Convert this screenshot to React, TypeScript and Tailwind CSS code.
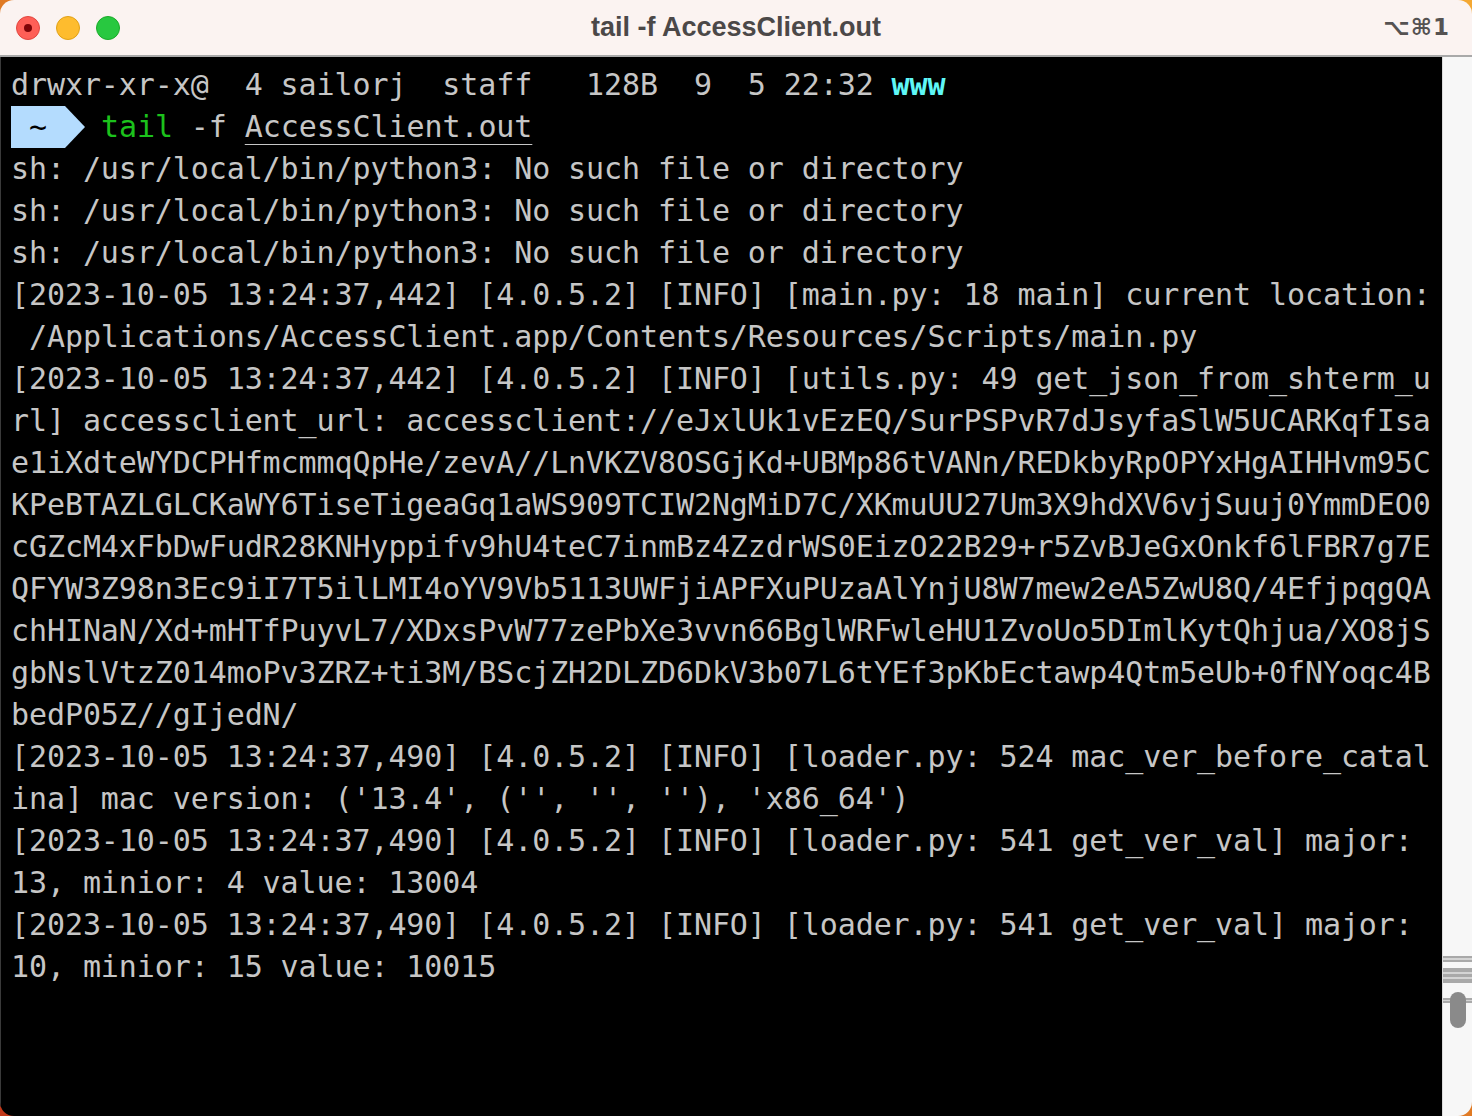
import type { ReactNode } from 'react';

const mono = { fontFamily: '"DejaVu Sans Mono", "Liberation Mono", monospace' };

const logLines: string[] = [
  'sh: /usr/local/bin/python3: No such file or directory',
  'sh: /usr/local/bin/python3: No such file or directory',
  'sh: /usr/local/bin/python3: No such file or directory',
  '[2023-10-05 13:24:37,442] [4.0.5.2] [INFO] [main.py: 18 main] current location:',
  ' /Applications/AccessClient.app/Contents/Resources/Scripts/main.py',
  '[2023-10-05 13:24:37,442] [4.0.5.2] [INFO] [utils.py: 49 get_json_from_shterm_u',
  'rl] accessclient_url: accessclient://eJxlUk1vEzEQ/SurPSPvR7dJsyfaSlW5UCARKqfIsa',
  'e1iXdteWYDCPHfmcmmqQpHe/zevA//LnVKZV8OSGjKd+UBMp86tVANn/REDkbyRpOPYxHgAIHHvm95C',
  'KPeBTAZLGLCKaWY6TiseTigeaGq1aWS909TCIW2NgMiD7C/XKmuUU27Um3X9hdXV6vjSuuj0YmmDEO0',
  'cGZcM4xFbDwFudR28KNHyppifv9hU4teC7inmBz4ZzdrWS0EizO22B29+r5ZvBJeGxOnkf6lFBR7g7E',
  'QFYW3Z98n3Ec9iI7T5ilLMI4oYV9Vb5113UWFjiAPFXuPUzaAlYnjU8W7mew2eA5ZwU8Q/4EfjpqgQA',
  'chHINaN/Xd+mHTfPuyvL7/XDxsPvW77zePbXe3vvn66BglWRFwleHU1ZvoUo5DImlKytQhjua/XO8jS',
  'gbNslVtzZ014moPv3ZRZ+ti3M/BScjZH2DLZD6DkV3b07L6tYEf3pKbEctawp4Qtm5eUb+0fNYoqc4B',
  'bedP05Z//gIjedN/',
  '[2023-10-05 13:24:37,490] [4.0.5.2] [INFO] [loader.py: 524 mac_ver_before_catal',
  "ina] mac version: ('13.4', ('', '', ''), 'x86_64')",
  '[2023-10-05 13:24:37,490] [4.0.5.2] [INFO] [loader.py: 541 get_ver_val] major:',
  '13, minior: 4 value: 13004',
  '[2023-10-05 13:24:37,490] [4.0.5.2] [INFO] [loader.py: 541 get_ver_val] major:',
  '10, minior: 15 value: 10015',
];

function Line({ children }: { children: ReactNode }) {
  return <div className="h-[42px] leading-[42px] whitespace-pre">{children}</div>;
}

function TrafficLights() {
  return (
    <div className="flex items-center gap-4 pl-4">
      <div className="w-6 h-6 rounded-full bg-[#fe5f57] border border-[#e2463f] flex items-center justify-center">
        <div className="w-2 h-2 rounded-full bg-[#7e0508]" />
      </div>
      <div className="w-6 h-6 rounded-full bg-[#febc2e] border border-[#e1a116]" />
      <div className="w-6 h-6 rounded-full bg-[#28c840] border border-[#1aab29]" />
    </div>
  );
}

export default function App() {
  return (
    <div className="w-[1472px] h-[1116px] bg-gradient-to-tr from-[#c2381a] via-[#e07a24] to-[#f4a832]">
      <div className="w-full h-full rounded-[14px] overflow-hidden flex flex-col">
        {/* Title bar */}
        <div className="relative h-[57px] shrink-0 bg-[#fbf3f1] border-b-2 border-[#a9a9a9] flex items-center">
          <TrafficLights />
          <div
            className="absolute inset-0 flex items-center justify-center text-[27px] font-bold text-[#4b4848]"
            style={{ fontFamily: '"Liberation Sans", Arial, sans-serif' }}
          >
            tail -f AccessClient.out
          </div>
          <div
            className="ml-auto pr-[22px] text-[23px] font-bold text-[#555252] tracking-[1px]"
            style={{ fontFamily: '"DejaVu Sans", sans-serif' }}
          >
            ⌥⌘1
          </div>
        </div>

        {/* Body */}
        <div className="flex-1 flex min-h-0">
          <div
            className="flex-1 bg-black pt-[7px] pl-[10px] text-[30px] tracking-[-0.09px] text-[#c6c6c6] border-l border-[#3a3a3a]"
            style={mono}
          >
            <Line>
              {'drwxr-xr-x@  4 sailorj  staff   128B  9  5 22:32 '}
              <span className="font-bold text-[#5ff7f7]">www</span>
            </Line>
            <div className="h-[42px] leading-[42px] whitespace-pre flex">
              <div className="w-[54px] h-[42px] bg-[#b4dcfe] text-black flex items-center justify-center">~</div>
              <svg width="20" height="42" viewBox="0 0 20 42" className="shrink-0 -mr-[2px]">
                <polygon points="0,0 20,21 0,42" fill="#b4dcfe" />
              </svg>
              <span>{' '}</span>
              <span className="text-[#1cc21c]">tail</span>
              <span>{' -f '}</span>
              <span className="underline decoration-1 underline-offset-[7px]">AccessClient.out</span>
            </div>
            {logLines.map((l, i) => (
              <Line key={i}>{l}</Line>
            ))}
          </div>

          {/* Scrollbar column */}
          <div className="relative w-[30px] shrink-0 bg-[#f7f7f7] border-l border-[#dcdcdc]">
            <div className="absolute left-0 right-0 top-[899px] h-[6px] bg-[#a9a9a9] flex items-center">
              <div className="w-full h-[2px] bg-[#d4d4d4]" />
            </div>
            <div className="absolute left-0 right-0 top-[911px] h-[15px] bg-[#a9a9a9] flex flex-col justify-center gap-[3px]">
              <div className="w-full h-[2px] bg-[#d4d4d4]" />
              <div className="w-full h-[2px] bg-[#d4d4d4]" />
            </div>
            <div className="absolute left-0 right-0 top-[941px] h-[5px] bg-[#a9a9a9] flex items-center">
              <div className="w-full h-[1px] bg-[#d4d4d4]" />
            </div>
            <div className="absolute left-[7px] top-[935px] w-[16px] h-[36px] rounded-full bg-[#8a8a8a]" />
          </div>
        </div>
      </div>
    </div>
  );
}
